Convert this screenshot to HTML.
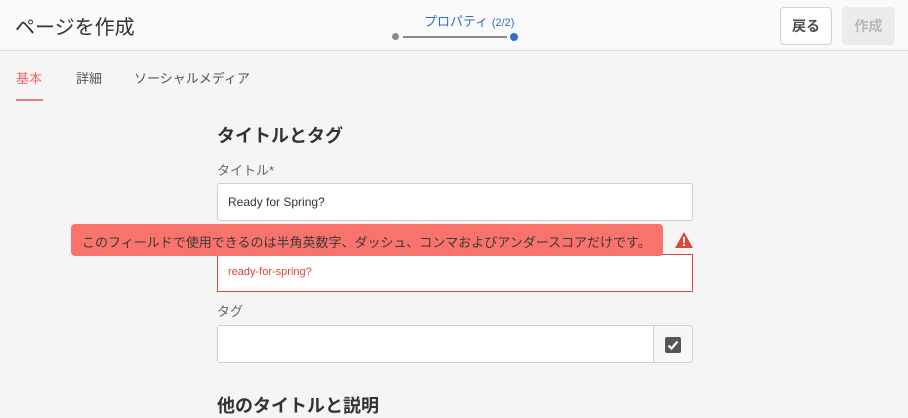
<!DOCTYPE html>
<html><head><meta charset="utf-8"><style>
*{margin:0;padding:0;box-sizing:border-box}
body{width:908px;height:408px;overflow:hidden;background:#f5f5f5;font-family:"Liberation Sans","Noto Sans CJK JP",sans-serif;position:relative;color:#4b4b4b}
.a{position:absolute;white-space:nowrap}
</style></head><body>
<div class="a" style="left:0;top:0;width:908px;height:51px;background:#fafafa;border-bottom:1px solid #dcdcdc"></div>
<div class="a" style="left:15px;top:11px;font-size:20px;color:#333">ページを作成</div>
<div class="a" style="left:424px;top:11px;font-size:13px;color:#326ec8">プロパティ <span style="font-size:11px">(2/2)</span></div>
<div class="a" style="left:392px;top:33px;width:7px;height:7px;border-radius:50%;background:#8a8a8a"></div>
<div class="a" style="left:403px;top:36px;width:104px;height:2px;background:#8a8a8a"></div>
<div class="a" style="left:510px;top:33px;width:8px;height:8px;border-radius:50%;background:#326ec8"></div>
<div class="a" style="left:780px;top:7px;width:52px;height:38px;border:1px solid #d0d0d0;border-radius:4px;background:#fff;font-size:14px;font-weight:bold;color:#4b4b4b;text-align:center;line-height:36px">戻る</div>
<div class="a" style="left:842px;top:7px;width:53px;height:38px;border-radius:4px;background:#ececec;font-size:14px;font-weight:bold;color:#b8b8b8;text-align:center;line-height:38px">作成</div>
<div class="a" style="left:16px;top:68px;font-size:13px;color:#ee6b6b">基本</div>
<div class="a" style="left:16px;top:99px;width:27px;height:2px;background:#f67b7b"></div>
<div class="a" style="left:76px;top:68px;font-size:13px;color:#555">詳細</div>
<div class="a" style="left:134px;top:68px;font-size:13px;color:#555">ソーシャルメディア</div>
<div class="a" style="left:217px;top:122px;font-size:18px;font-weight:bold;color:#333">タイトルとタグ</div>
<div class="a" style="left:217px;top:160px;font-size:13px;color:#666">タイトル*</div>
<div class="a" style="left:217px;top:183px;width:476px;height:38px;background:#fff;border:1px solid #d0d0d0;border-radius:3px"></div>
<div class="a" style="left:228px;top:195px;font-size:12px;color:#333">Ready for Spring?</div>
<div class="a" style="left:217px;top:254px;width:476px;height:38px;background:#fff;border:1px solid #e0453a"></div>
<div class="a" style="left:228px;top:266px;font-size:11px;color:#e0453a">ready-for-spring?</div>
<div class="a" style="left:71px;top:224px;width:592px;height:32px;background:#f8736c;border-radius:4px"></div>
<div class="a" style="left:82px;top:232px;font-size:13px;color:#3a3a3a">このフィールドで使用できるのは半角英数字、ダッシュ、コンマおよびアンダースコアだけです。</div>
<svg class="a" style="left:674px;top:231px" width="20" height="18" viewBox="0 0 20 18"><path d="M10 1L19 17H1Z" fill="#e0453a"/><rect x="9" y="6" width="2" height="6" fill="#fff"/><rect x="9" y="13" width="2" height="2" fill="#fff"/></svg>
<div class="a" style="left:217px;top:301px;font-size:13px;color:#666">タグ</div>
<div class="a" style="left:217px;top:325px;width:476px;height:38px;background:#fff;border:1px solid #d0d0d0;border-radius:3px"></div>
<div class="a" style="left:653px;top:326px;width:39px;height:36px;background:#f8f8f8;border-left:1px solid #d0d0d0"></div>
<svg class="a" style="left:665px;top:337px" width="16" height="16" viewBox="0 0 16 16"><rect x="0" y="0" width="16" height="16" rx="2" fill="#555"/><path d="M3.5 8.5L6.5 11.5L12.5 4.5" stroke="#fff" stroke-width="2.2" fill="none"/></svg>
<div class="a" style="left:217px;top:392px;font-size:18px;font-weight:bold;color:#333">他のタイトルと説明</div>
</body></html>
